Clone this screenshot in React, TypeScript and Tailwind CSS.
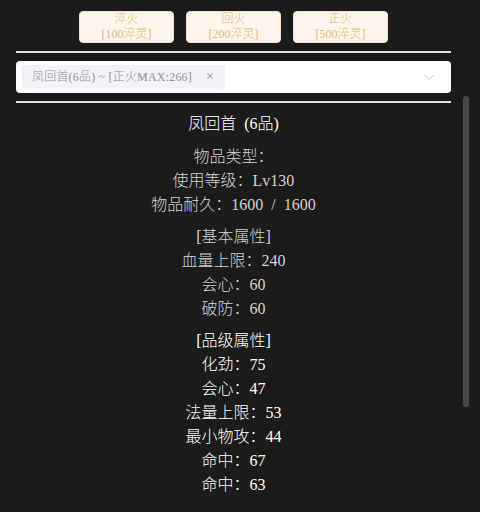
const FONT = { fontFamily: '"Liberation Serif", "Noto Sans CJK SC", serif' };

const buttons = [
  { name: "淬火", cost: "[100淬灵]" },
  { name: "回火", cost: "[200淬灵]" },
  { name: "正火", cost: "[500淬灵]" },
];

const baseInfo = ["物品类型：", "使用等级：Lv130", "物品耐久：1600\u2002/\u20021600"];
const baseAttrs = ["血量上限：240", "会心：60", "破防：60"];
const gradeAttrs = ["化劲：75", "会心：47", "法量上限：53", "最小物攻：44", "命中：67", "命中：63"];

function Divider() {
  return <div className="h-[2px] w-full bg-[#e2e2e2]" />;
}

export default function App() {
  return (
    <div className="relative h-[512px] w-[480px] overflow-hidden bg-[#1b1b1b] font-light" style={FONT}>
      <div className="ml-4 flex w-[435px] flex-col gap-2 pt-[11px]">
        {/* refine buttons */}
        <div className="flex justify-center gap-3">
          {buttons.map((b) => (
            <button
              key={b.name}
              className="flex h-8 w-[95px] flex-col items-center justify-center rounded border border-[#f8e3c5] bg-[#fdf6ec] text-xs leading-[15px] text-[#e9b572]"
            >
              <span>{b.name}</span>
              <span>{b.cost}</span>
            </button>
          ))}
        </div>

        <Divider />

        {/* select */}
        <div className="flex h-8 items-center rounded bg-white pl-[6px] pr-4">
          <div className="flex h-6 items-center gap-[14px] rounded bg-[#f0f2f5] pl-[10px] pr-[11px] text-xs text-[#909399]">
            <span className="tracking-[0.2px]">凤回首(6品) ~ [正火MAX:266]</span>
            <span className="text-sm leading-none">×</span>
          </div>
          <svg className="ml-auto" width="12" height="12" viewBox="0 0 12 12">
            <path d="M1.5 4l4.5 4.5L10.5 4" fill="none" stroke="#c0c4cc" strokeWidth="1" />
          </svg>
        </div>

        <Divider />

        {/* item detail */}
        <div className="flex flex-col items-center gap-2 pt-[1px] text-base leading-6">
          <div className="mb-px text-white">凤回首{"\u2002"}(6品)</div>
          <div className="flex flex-col items-center text-[#d2d2d2]">
            {baseInfo.map((t) => (
              <div key={t}>{t}</div>
            ))}
          </div>
          <div className="flex flex-col items-center text-[#d2d2d2]">
            <div>[基本属性]</div>
            {baseAttrs.map((t) => (
              <div key={t}>{t}</div>
            ))}
          </div>
          <div className="flex flex-col items-center text-white">
            <div>[品级属性]</div>
            {gradeAttrs.map((t, i) => (
              <div key={i}>{t}</div>
            ))}
          </div>
        </div>
      </div>

      {/* scrollbar thumb */}
      <div className="absolute left-[463px] top-[96px] h-[311px] w-[6px] rounded-sm bg-[#474747]" />
    </div>
  );
}
